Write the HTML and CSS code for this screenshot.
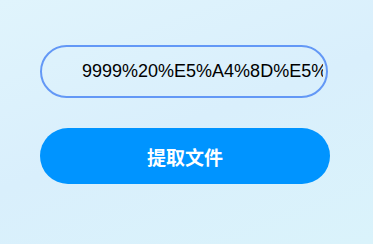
FILE: index.html
```html
<!DOCTYPE html>
<html lang="zh">
<head>
<meta charset="utf-8">
<link rel="stylesheet" href="styles.css">
</head>
<body>
<div class="page">
  <input class="code-input" type="text" value="9999%20%E5%A4%8D%E5%88%B6">
  <button class="fetch-btn" type="button">提取文件</button>
</div>
</body>
</html>
```
FILE: styles.css
```css
html, body {
  margin: 0;
  padding: 0;
  width: 373px;
  height: 244px;
  overflow: hidden;
}
body {
  background: linear-gradient(160deg, #e0f4fc 0%, #d9effc 50%, #daf3fb 100%);
}
.page {
  display: flex;
  flex-direction: column;
  align-items: flex-start;
  gap: 30px;
  padding: 45px 0 0 40px;
}
.code-input {
  box-sizing: border-box;
  width: 288px;
  height: 53px;
  margin: 0;
  padding: 0 3px 0 40px;
  border: 2px solid #6398f6;
  border-radius: 27px;
  background: transparent;
  font-family: "Liberation Sans", Arial, sans-serif;
  font-size: 18px;
  color: #000;
  outline: none;
}
.fetch-btn {
  box-sizing: border-box;
  width: 290px;
  height: 56px;
  margin: 0;
  padding: 0;
  border: none;
  border-radius: 28px;
  background: #0094ff;
  color: #fff;
  font-family: "Noto Sans CJK SC", "Noto Sans", sans-serif;
  font-weight: 700;
  font-size: 19px;
  cursor: pointer;
}
```
